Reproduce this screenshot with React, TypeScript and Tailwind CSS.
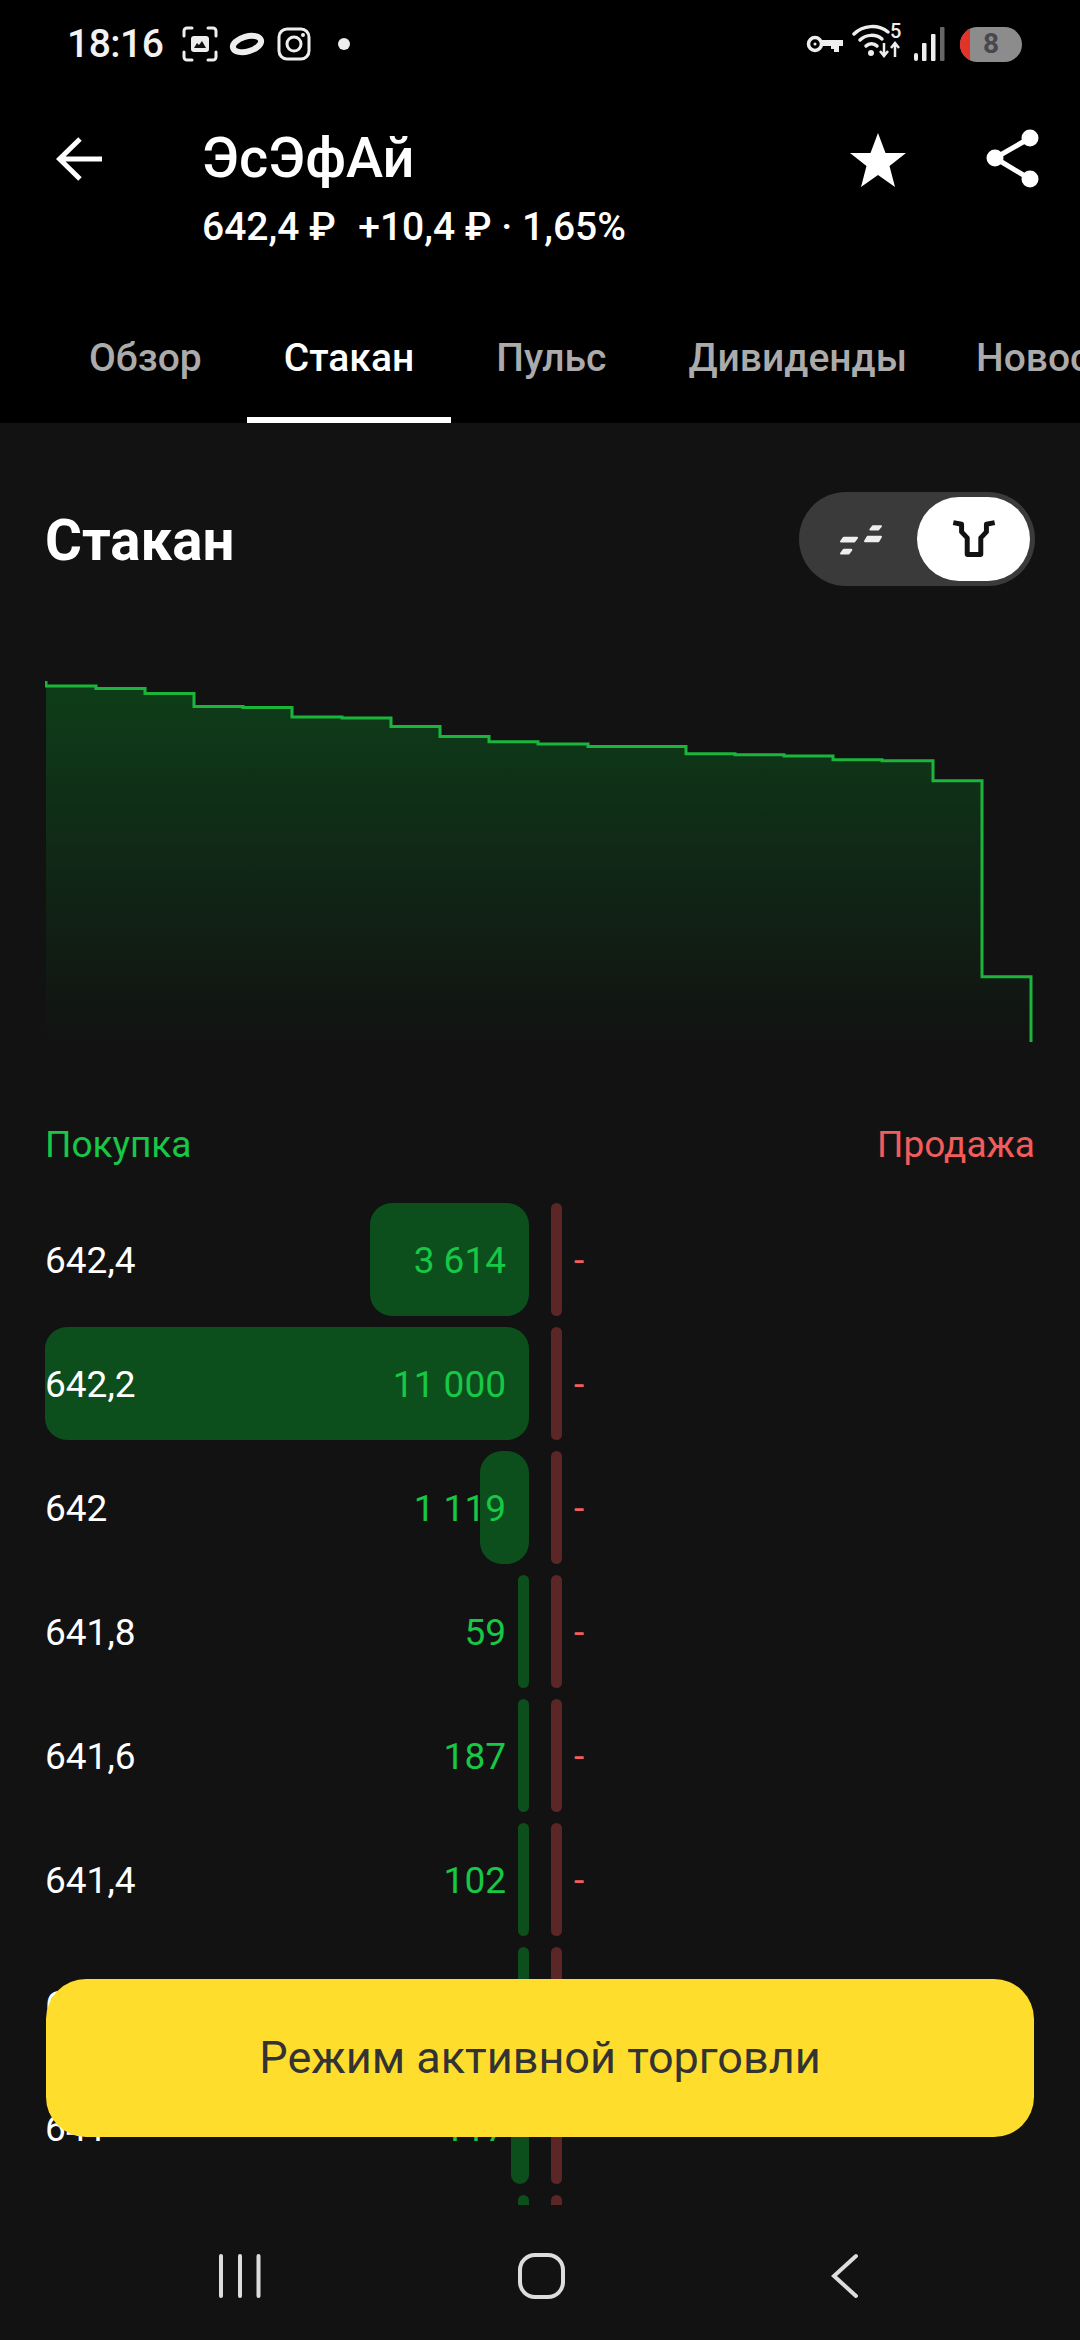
import React from "react";

const rows: { price: string; value: string; bar: number }[] = [
  { price: "642,4", value: "3 614", bar: 159 },
  { price: "642,2", value: "11 000", bar: 484 },
  { price: "642", value: "1 119", bar: 49 },
  { price: "641,8", value: "59", bar: 11 },
  { price: "641,6", value: "187", bar: 11 },
  { price: "641,4", value: "102", bar: 11 },
  { price: "641,2", value: "64", bar: 11 },
  { price: "641", value: "117", bar: 18 },
  { price: "640,8", value: "45", bar: 11 },
];

const steps: [number, number][] = [
  [46, 686], [96, 688.5], [145, 693.5], [194, 706.5], [243, 707.5], [292, 717], [342, 718],
  [391, 726.5], [440, 736.5], [489, 741.7], [538, 744], [588, 746.5], [686, 753.7], [735, 754.7],
  [784, 756], [833, 759.7], [882, 760.7], [933, 780.7], [982, 976.7],
];

function chartLine(): string {
  let d = "M46 681 L46 686";
  steps.forEach(([x, y], i) => {
    const nx = i + 1 < steps.length ? steps[i + 1][0] : 1031;
    d += ` L${x} ${y} L${nx} ${y}`;
  });
  return d + " L1031 1042";
}

function StatusLeft() {
  return (
    <div className="flex items-center">
      <span className="text-[39px] font-medium text-[#f2f2f2] w-[115px] ml-[67px] tracking-[-0.5px]">18:16</span>
      <svg width="36" height="36" viewBox="0 0 36 36" fill="none" className="text-[#eee] ml-0">
        <path d="M2 10V5a3 3 0 0 1 3-3h5M26 2h5a3 3 0 0 1 3 3v5M34 26v5a3 3 0 0 1-3 3h-5M10 34H5a3 3 0 0 1-3-3v-5" stroke="currentColor" strokeWidth="3" strokeLinecap="round" />
        <rect x="9" y="10" width="18" height="16" rx="3" fill="currentColor" />
        <path d="M12 22l3-5 2 2 3-4 4 7z" fill="#111" />
      </svg>
      <svg width="36" height="26" viewBox="0 0 36 26" fill="none" className="ml-[11px]">
        <ellipse cx="18" cy="13" rx="14.500" ry="7.500" transform="rotate(-16 18 13)" stroke="#eee" strokeWidth="6" />
      </svg>
      <svg width="34" height="34" viewBox="0 0 34 34" fill="none" className="ml-[12px]">
        <rect x="2" y="2" width="30" height="30" rx="8" stroke="#eee" strokeWidth="3" />
        <circle cx="17" cy="17" r="7" stroke="#eee" strokeWidth="3" />
        <circle cx="26" cy="8" r="2" fill="#eee" />
      </svg>
      <span className="w-[12px] h-[12px] rounded-full bg-[#eee] ml-[27px]" />
    </div>
  );
}

function StatusRight() {
  return (
    <div className="flex items-center mr-[58px]">
      <svg width="37" height="18" viewBox="0 0 37 18" fill="none">
        <circle cx="9" cy="9" r="6.500" stroke="#eee" strokeWidth="3.500" />
        <circle cx="9" cy="9" r="1.500" fill="#eee" />
        <path d="M15 5h22v6h-4v6h-5v-3h-3v-3h-10z" fill="#eee" />
      </svg>
      <svg width="50" height="40" viewBox="0 0 50 40" fill="none" className="ml-[9px] mb-[6px]">
        <path d="M2 13C11 4 26 3 36 11" stroke="#eee" strokeWidth="3.500" strokeLinecap="round" />
        <path d="M8 19c6-6 16-6 22-1" stroke="#eee" strokeWidth="3.500" strokeLinecap="round" />
        <path d="M14 25c3-3 8-3 11 0" stroke="#eee" strokeWidth="3.500" strokeLinecap="round" />
        <circle cx="19" cy="32" r="3" fill="#eee" />
        <path d="M32 22v12m-4-4 4 5 4-5" stroke="#eee" strokeWidth="2.500" />
        <path d="M43 36V23m-4 4 4-5 4 5" stroke="#eee" strokeWidth="2.500" />
        <text x="38" y="17" fill="#eee" fontSize="20" fontFamily="Roboto, sans-serif" fontWeight="500">5</text>
      </svg>
      <svg width="32" height="36" viewBox="0 0 32 36" className="ml-[11px]">
        <rect x="1" y="27" width="4" height="8" rx="2" fill="#eee" />
        <rect x="9" y="17" width="4.500" height="18" rx="1" fill="#eee" />
        <rect x="18" y="8" width="4.500" height="27" rx="1" fill="#eee" />
        <rect x="27" y="1" width="4.500" height="34" rx="1" fill="#666" />
      </svg>
      <div className="w-[62px] h-[35px] ml-[15px] rounded-full bg-[#8c8c8c] overflow-hidden flex items-center">
        <span className="w-[10px] h-full bg-[#e33228] shrink-0" />
        <span className="flex-1 text-center text-[28px] leading-none font-bold text-[#48484c] pr-[10px]">8</span>
      </div>
    </div>
  );
}

function Tab({ label, active, last }: { label: string; active?: boolean; last?: boolean }) {
  return (
    <div className={`relative shrink-0 px-[37px] h-[106px] pb-[24px] flex items-center ${last ? "-ml-[13px]" : ""}`}>
      <span className={`text-[39px] font-medium ${active ? "text-white" : "text-[#ababab]"}`}>{label}</span>
      {active && <span className="absolute left-0 right-0 bottom-0 h-[6px] bg-white" />}
    </div>
  );
}

export default function App() {
  return (
    <div className="relative w-[1080px] h-[2340px] overflow-hidden bg-[#121212] text-white font-['Roboto',sans-serif]">
      <header className="bg-black h-[423px] flex flex-col">
        <div className="h-[88px] flex items-center justify-between shrink-0">
          <StatusLeft />
          <StatusRight />
        </div>
        <div className="flex items-start h-[229px] shrink-0">
          <svg width="48" height="46" viewBox="0 0 48 46" fill="none" className="ml-[56px] mt-[48px]">
            <path d="M46 23H4M24 3 3.500 23 24 43" stroke="white" strokeWidth="5" />
          </svg>
          <div className="ml-[98px] flex flex-col mt-[37px]">
            <span className="text-[56px] leading-[66px] font-medium">ЭсЭфАй</span>
            <span className="text-[39px] leading-[46px] font-medium mt-[13px] whitespace-pre">
              <span className="mr-[3px]">642,4 ₽  </span>+10,4 ₽ · 1,65%
            </span>
          </div>
          <svg width="58" height="56" viewBox="0 0 58 56" className="ml-auto mt-[44px]">
            <path d="M29 1l7.500 20H57L40.500 34 46 55 29 43 12 55l5.500-21L1 21h20.500z" fill="white" />
          </svg>
          <svg width="54" height="60" viewBox="0 0 54 60" fill="none" className="ml-[79px] mr-[40px] mt-[41px]">
            <path d="M44 9 9 29l35 21" stroke="white" strokeWidth="5" />
            <circle cx="44" cy="9" r="8.500" fill="white" />
            <circle cx="9" cy="29" r="8.500" fill="white" />
            <circle cx="44" cy="50" r="8.500" fill="white" />
          </svg>
        </div>
        <nav className="flex gap-[8px] pl-[52px] overflow-hidden">
          <Tab label="Обзор" />
          <Tab label="Стакан" active />
          <Tab label="Пульс" />
          <Tab label="Дивиденды" />
          <Tab label="Новости" last />
        </nav>
      </header>

      <section className="flex items-start justify-between h-[163px] pt-[69px] pl-[45px] pr-[45px]">
        <h1 className="text-[56.500px] leading-[94px] font-bold mt-[2px]">Стакан</h1>
        <div className="w-[236px] h-[94px] rounded-full bg-[#3a3a3a] flex items-center justify-between pr-[5px]">
          <svg width="46" height="33" viewBox="415 158 138 98" fill="#eee" stroke="#eee" strokeWidth="6" strokeLinejoin="round" className="ml-[39px]">
            <path d="M432 202H472L464 213H424Z" />
            <path d="M432 238H455L447 249H424Z" />
            <path d="M504 199H544L536 212H496Z" />
            <path d="M520 167H544L536 177H512Z" />
          </svg>
          <div className="w-[113px] h-[84px] rounded-full bg-white flex items-center justify-center">
            <svg width="48" height="42" viewBox="750 145 145 125" fill="none">
              <path d="M760 158 785 163V186L802 204V254H843V204L860 186V163L885 158" stroke="#121212" strokeWidth="15" strokeLinejoin="round" />
            </svg>
          </div>
        </div>
      </section>

      <svg width="990" height="380" viewBox="45 670 990 380" fill="none" className="block ml-[45px] mt-[84px]">
        <defs>
          <linearGradient id="depth" gradientUnits="userSpaceOnUse" x1="0" y1="686" x2="0" y2="1040">
            <stop offset="0" stopColor="#0e3d19" />
            <stop offset="1" stopColor="#121212" />
          </linearGradient>
        </defs>
        <path d={chartLine() + " L1031 1042 L46 1042 Z"} fill="url(#depth)" />
        <path d={chartLine()} stroke="#1cb53c" strokeWidth="3" />
      </svg>

      <div className="flex justify-between px-[45px] mt-[70px] text-[37px] leading-[50px]">
        <span className="text-[#17c746]">Покупка</span>
        <span className="text-[#f45b5b]">Продажа</span>
      </div>

      <div className="mt-[33px] h-[1002px] overflow-hidden flex flex-col gap-[11px] pl-[45px]">
        {rows.map((r) => (
          <div key={r.price} className="flex items-stretch h-[113px] shrink-0">
            <div className="relative w-[484px] flex items-center justify-between pr-[23px] pt-[3px]">
              <span className="absolute right-0 top-0 bottom-0 rounded-[22px] bg-[#0c4f1c]" style={{ width: r.bar }} />
              <span className="relative text-[37px] text-white">{r.price}</span>
              <span className="relative text-[37px] text-[#17c746]">{r.value}</span>
            </div>
            <span className="w-[11px] ml-[22px] rounded-full bg-[#5c2626]" />
            <span className="self-center ml-[12px] pt-[3px] text-[37px] text-[#ef5f5f]">-</span>
          </div>
        ))}
      </div>

      <button className="absolute left-[46px] top-[1979px] w-[988px] h-[158px] rounded-[40px] bg-[#ffdd2d] text-[#333333] text-[45px]">
        Режим активной торговли
      </button>

      <nav className="flex justify-between items-center pl-[219px] pr-[221px] h-[46px] mt-[48px]">
        <svg width="42" height="44" viewBox="0 0 42 44" fill="none">
          <path d="M2 2v40M21 2v40M39.500 2v40" stroke="#ddd" strokeWidth="4" strokeLinecap="round" />
        </svg>
        <span className="w-[47px] h-[46px] rounded-[17px] border-[4px] border-[#ddd] mr-[9px]" />
        <svg width="28" height="46" viewBox="0 0 28 46" fill="none">
          <path d="M25 3 3 23l22 20" stroke="#ddd" strokeWidth="4" strokeLinecap="round" />
        </svg>
      </nav>
    </div>
  );
}
